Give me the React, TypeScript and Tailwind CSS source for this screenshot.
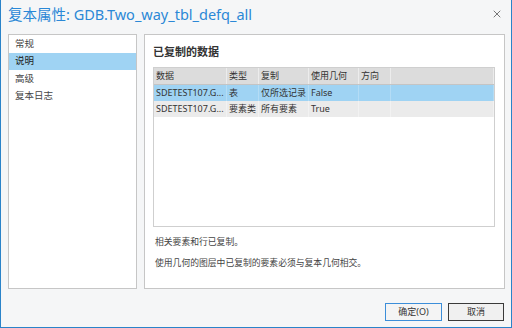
import { X } from 'lucide-react'
import clsx from 'clsx'

const NAV = ['常规', '说明', '高级', '复本日志']

const COLS = ['数据', '类型', '复制', '使用几何', '方向', '']

const ROWS = [
  ['SDETEST107.G...', '表', '仅所选记录', 'False', '', ''],
  ['SDETEST107.G...', '要素类', '所有要素', 'True', '', ''],
]

export default function App() {
  return (
    <div className="w-[512px] h-[328px] bg-[#f5f6f7] border-x border-b border-[#2a83c9] flex flex-col font-['Noto_Sans','Noto_Sans_CJK_SC',sans-serif] text-[#333]">
      {/* Title bar */}
      <div className="h-[34px] flex items-center justify-between pl-[7px] pr-[8px] shrink-0">
        <div className="text-[14.5px] leading-none text-[#2b88d6] -mt-[6px]">复本属性: GDB.Two_way_tbl_defq_all</div>
        <X size={12} strokeWidth={1.6} className="text-[#555] -mt-[6px]" />
      </div>

      {/* Panels */}
      <div className="flex gap-[7px] pl-[7px] h-[255px] shrink-0">
        <div className="w-[129px] bg-white border border-[#c6c6c6] flex flex-col">
          {NAV.map((n, i) => (
            <div
              key={n}
              className={clsx(
                'h-[17.5px] flex items-center pl-[6px] text-[9.5px]',
                i === 1 ? 'bg-[#9fd3f3] text-[#222]' : 'text-[#444]',
              )}
            >
              {n}
            </div>
          ))}
        </div>

        <div className="w-[361px] bg-white border border-[#c6c6c6] flex flex-col pl-[8px] pr-[9px]">
          <div className="h-[32px] flex items-center text-[11px] font-bold text-[#333] pt-[2px]">已复制的数据</div>
          <div className="h-[160px] border border-[#cfcfcf] flex flex-col">
            <div className="grid grid-cols-[73px_32px_50px_50px_32px_1fr] h-[17px] bg-[#dcdcdc] border-b border-[#c4c4c4]">
              {COLS.map((c, i) => (
                <div key={i} className="flex items-center pl-[2px] text-[9px] text-[#333] border-r border-[#ececec]">
                  {c}
                </div>
              ))}
            </div>
            {ROWS.map((r, ri) => (
              <div
                key={ri}
                className={clsx(
                  'grid grid-cols-[73px_32px_50px_50px_32px_1fr] h-[16px]',
                  ri === 0 ? 'bg-[#9fd3f3]' : 'bg-[#ebebeb]',
                )}
              >
                {r.map((c, i) => (
                  <div
                    key={i}
                    className={clsx(
                      'flex items-center pl-[2px] text-[9px] text-[#333] whitespace-nowrap overflow-hidden border-r',
                      ri === 0 ? 'border-[#b4dcf5]' : 'border-[#f2f2f2]',
                    )}
                  >
                    {c}
                  </div>
                ))}
              </div>
            ))}
          </div>
          <div className="mt-[9px] pl-[2px] text-[8.8px] leading-[13px] text-[#444]">相关要素和行已复制。</div>
          <div className="mt-[8px] pl-[2px] text-[8.8px] leading-[13px] text-[#444]">使用几何的图层中已复制的要素必须与复本几何相交。</div>
        </div>
      </div>

      {/* Footer */}
      <div className="flex justify-end gap-[6px] pr-[7px] pt-[14px]">
        <button className="w-[57px] h-[18px] border border-[#3c8ed9] bg-[#f4f4f4] text-[9px] text-[#333] flex items-center justify-center">
          确定(O)
        </button>
        <button className="w-[56px] h-[18px] border border-[#3a3a3a] bg-[#f0f0f0] text-[9px] text-[#333] flex items-center justify-center">
          取消
        </button>
      </div>
    </div>
  )
}
